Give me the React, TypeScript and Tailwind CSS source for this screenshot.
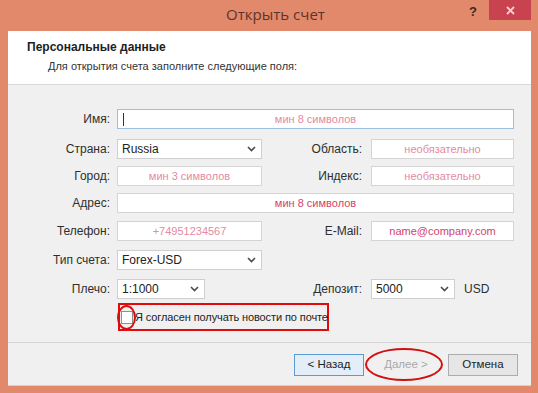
import React from 'react';

const font = "font-['Liberation_Sans',_'DejaVu_Sans',_sans-serif]";

const Chevron: React.FC = () => (
  <svg width="9" height="6" viewBox="0 0 9 6" className="shrink-0">
    <polyline points="1,1 4.5,4.5 8,1" fill="none" stroke="#4a4a4a" strokeWidth="1.6" />
  </svg>
);

const Label: React.FC<{ text: string; w: string }> = ({ text, w }) => (
  <div className={`${w} shrink-0 text-right text-[12px] text-[#2e2e2e]`}>{text}</div>
);

const Field: React.FC<{ w: string; text?: string; strong?: boolean; focus?: boolean }> = ({ w, text, strong, focus }) => (
  <div
    className={`${w} h-[20px] relative bg-white border ${focus ? 'border-[#9cc0e2]' : 'border-[#d4d4d4]'} flex items-center justify-center text-[11px] ${strong ? 'text-[#d2446a]' : 'text-[#e58aa2]'}`}
  >
    {focus && <span className="absolute left-[5px] top-[3px] w-px h-[13px] bg-[#333]" />}
    {text}
  </div>
);

const Select: React.FC<{ w: string; value: string }> = ({ w, value }) => (
  <div className={`${w} h-[20px] bg-white border border-[#cfcfcf] flex items-center justify-between pl-[4px] pr-[5px] text-[12px] text-[#222]`}>
    <span>{value}</span>
    <Chevron />
  </div>
);

const App: React.FC = () => {
  return (
    <div className={`w-[538px] h-[393px] bg-[#e2886b] flex flex-col ${font}`}>
      {/* title bar */}
      <div className="h-[31px] flex items-start shrink-0">
        <div className="flex-1 flex justify-center pt-[3px] pl-[82px]">
          <span className="font-['Open_Sans'] text-[15px] text-[#5b3529]">Открыть счет</span>
        </div>
        <div className="w-[14px] text-[13px] font-bold text-[#3a2a22] pt-[2px] mr-[6px]">?</div>
        <div className="w-[42px] h-[20px] bg-[#c8434f] flex items-center justify-center mr-[7px]">
          <svg width="9" height="9" viewBox="0 0 9 9">
            <path d="M1 1 L8 8 M8 1 L1 8" stroke="#f4d4d8" strokeWidth="1.8" />
          </svg>
        </div>
      </div>

      {/* client */}
      <div className="ml-[8px] mr-[7px] flex-1 flex flex-col">
        <div className="h-[54px] bg-white border-b border-[#d8d8d8] pl-[19px] pt-[7px]">
          <div className="text-[12px] font-bold text-[#1e1e1e]">Персональные данные</div>
          <div className="text-[11px] text-[#333] pl-[21px] mt-[2px]">Для открытия счета заполните следующие поля:</div>
        </div>

        <div className="flex-1 bg-[#f0f0f0] flex flex-col pt-[24px]">
          <div className="flex items-center gap-[7px]">
            <Label text="Имя:" w="w-[102px]" />
            <Field w="w-[397px]" text="мин 8 символов" focus />
          </div>

          <div className="flex items-center mt-[10px]">
            <Label text="Страна:" w="w-[102px]" />
            <div className="ml-[7px]"><Select w="w-[145px]" value="Russia" /></div>
            <Label text="Область:" w="w-[100px]" />
            <div className="ml-[9px]"><Field w="w-[143px]" text="необязательно" /></div>
          </div>

          <div className="flex items-center mt-[7px]">
            <Label text="Город:" w="w-[102px]" />
            <div className="ml-[7px]"><Field w="w-[145px]" text="мин 3 символов" /></div>
            <Label text="Индекс:" w="w-[100px]" />
            <div className="ml-[9px]"><Field w="w-[143px]" text="необязательно" /></div>
          </div>

          <div className="flex items-center gap-[7px] mt-[7px]">
            <Label text="Адрес:" w="w-[102px]" />
            <Field w="w-[397px]" text="мин 8 символов" strong />
          </div>

          <div className="flex items-center mt-[8px]">
            <Label text="Телефон:" w="w-[102px]" />
            <div className="ml-[7px]"><Field w="w-[145px]" text="+74951234567" /></div>
            <Label text="E-Mail:" w="w-[100px]" />
            <div className="ml-[9px]"><Field w="w-[143px]" text="name@company.com" strong /></div>
          </div>

          <div className="flex items-center gap-[7px] mt-[9px]">
            <Label text="Тип счета:" w="w-[102px]" />
            <Select w="w-[145px]" value="Forex-USD" />
          </div>

          <div className="flex items-center mt-[9px]">
            <Label text="Плечо:" w="w-[102px]" />
            <div className="ml-[7px]"><Select w="w-[88px]" value="1:1000" /></div>
            <Label text="Депозит:" w="w-[157px]" />
            <div className="ml-[9px]"><Select w="w-[84px]" value="5000" /></div>
            <span className="ml-[9px] text-[12px] text-[#2e2e2e]">USD</span>
          </div>

          <div className="ml-[110px] mt-[4px] w-[211px] h-[28px] border-2 border-[#e10b0b] flex items-center pl-[1px] relative">
            <div className="w-[12px] h-[13px] shrink-0 bg-white border border-[#8f8f8f]" />
            <span className="ml-[2px] whitespace-nowrap text-[11px] tracking-[-0.1px] text-[#222]">Я согласен получать новости по почте</span>
            <div className="absolute left-[-3px] top-[0px] w-[19px] h-[25px] rounded-[50%] border-2 border-[#d31010]" />
          </div>

          <div className="mt-[11px] h-px bg-[#d6d6d6]" />

          <div className="flex justify-end gap-[7px] pr-[13px] mt-[11px]">
            <div className="w-[70px] h-[22px] border border-[#5c9bd1] bg-[#e3eef9] flex items-center justify-center text-[11.5px] text-[#222]">&lt; Назад</div>
            <div className="w-[70px] h-[22px] relative flex items-center justify-center text-[11.5px] text-[#a8a8a8]">
              Далее &gt;
              <div className="absolute left-[-6px] top-[-6px] w-[78px] h-[33px] rounded-[50%] border-2 border-[#d31010]" />
            </div>
            <div className="w-[70px] h-[22px] border border-[#adadad] bg-[#e6e6e6] flex items-center justify-center text-[11.5px] text-[#222]">Отмена</div>
          </div>
        </div>
        <div className="h-px bg-[#f2c7b8]" />
      </div>
      <div className="h-[7px] shrink-0" />
    </div>
  );
};

export default App;
